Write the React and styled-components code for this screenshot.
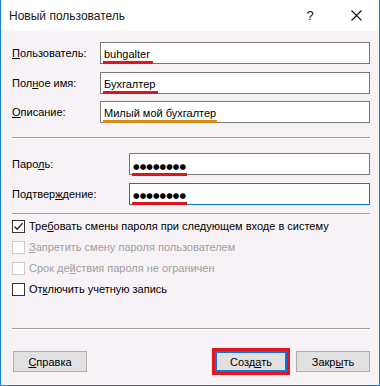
import React from "react";
import styled, { createGlobalStyle } from "styled-components";

const GlobalStyle = createGlobalStyle`
  html, body {
    margin: 0;
    padding: 0;
    background: #ffffff;
  }
  * {
    box-sizing: border-box;
  }
`;

export default function App() {
  return (
    <>
      <GlobalStyle />
      <Window>
        <TitleBar>
          <Title>Новый пользователь</Title>
          <HelpButton>?</HelpButton>
          <CloseButton>
            <svg width="11" height="11" viewBox="0 0 11 11">
              <path d="M0.5 0.5 L10.5 10.5 M10.5 0.5 L0.5 10.5" stroke="#111" strokeWidth="1.1" />
            </svg>
          </CloseButton>
        </TitleBar>

        <Client>
          <FieldGroup>
            <FieldRow>
              <Label width={88}>
                <Key>П</Key>ользователь:
              </Label>
              <Input>
                <Mark color="#e0141b" extra={3}>buhgalter</Mark>
              </Input>
            </FieldRow>
            <FieldRow>
              <Label width={88}>
                Пол<Key>н</Key>ое имя:
              </Label>
              <Input>
                <Mark color="#e0141b" extra={3}>Бухгалтер</Mark>
              </Input>
            </FieldRow>
            <FieldRow>
              <Label width={88}>
                <Key>О</Key>писание:
              </Label>
              <Input>
                <Mark color="#d98c14" extra={1}>Милый мой бухгалтер</Mark>
              </Input>
            </FieldRow>
          </FieldGroup>

          <Separator top={14} />

          <FieldGroup top={15}>
            <FieldRow>
              <Label width={117}>
                Паро<Key>л</Key>ь:
              </Label>
              <Input>
                <Mark color="#e0141b" extra={1}>
                  <Dots>●●●●●●●●</Dots>
                </Mark>
              </Input>
            </FieldRow>
            <FieldRow>
              <Label width={117}>
                Подтвер<Key>ж</Key>дение:
              </Label>
              <Input focused>
                <Mark color="#e0141b" extra={1}>
                  <Dots>●●●●●●●●</Dots>
                </Mark>
              </Input>
            </FieldRow>
          </FieldGroup>

          <Separator top={8} />

          <CheckList>
            <CheckRow>
              <Box checked>
                <svg width="11" height="11" viewBox="0 0 11 11">
                  <path d="M1.5 5.5 L4.2 8.3 L9.6 2.2" fill="none" stroke="#222" strokeWidth="1.3" />
                </svg>
              </Box>
              <CheckText>
                Тре<Key>б</Key>овать смены пароля при следующем входе в систему
              </CheckText>
            </CheckRow>
            <CheckRow>
              <Box disabled />
              <CheckText disabled>
                <Key>З</Key>апретить смену пароля пользователем
              </CheckText>
            </CheckRow>
            <CheckRow>
              <Box disabled />
              <CheckText disabled>
                Срок де<Key>й</Key>ствия пароля не ограничен
              </CheckText>
            </CheckRow>
            <CheckRow>
              <Box />
              <CheckText>
                От<Key>к</Key>лючить учетную запись
              </CheckText>
            </CheckRow>
          </CheckList>

          <Spacer />

          <Separator top={0} />

          <ButtonBar>
            <Button>
              <Key>С</Key>правка
            </Button>
            <Highlight>
              <Button primary>
                Созд<Key>а</Key>ть
              </Button>
            </Highlight>
            <Button>
              Закр<Key>ы</Key>ть
            </Button>
          </ButtonBar>
        </Client>
      </Window>
    </>
  );
}

const Window = styled.div`
  display: flex;
  flex-direction: column;
  width: 380px;
  height: 386px;
  border-left: 1px solid #1c7fd2;
  border-right: 1px solid #1c7fd2;
  border-bottom: 1px solid #1c7fd2;
  font-family: "Liberation Sans", Arial, sans-serif;
  font-size: 11px;
  color: #000;
`;

const TitleBar = styled.div`
  display: flex;
  align-items: center;
  height: 31px;
  flex-shrink: 0;
  padding-left: 8px;
  background: #ffffff;
`;

const Title = styled.div`
  flex: 1;
  font-size: 12px;
  color: #1a1a1a;
`;

const HelpButton = styled.div`
  width: 46px;
  text-align: center;
  font-size: 13px;
  color: #111;
`;

const CloseButton = styled.div`
  display: flex;
  align-items: center;
  justify-content: center;
  width: 46px;
`;

const Client = styled.div`
  display: flex;
  flex-direction: column;
  flex: 1;
  padding: 11px 9px 10px 11px;
  background: #f7f2f5;
`;

const FieldGroup = styled.div`
  display: flex;
  flex-direction: column;
  gap: 7.5px;
  margin-top: ${(p) => p.top || 0}px;
`;

const FieldRow = styled.div`
  display: flex;
  align-items: center;
  height: 22px;
`;

const Label = styled.div`
  width: ${(p) => p.width}px;
  flex-shrink: 0;
  white-space: nowrap;
`;

const Key = styled.span`
  text-decoration: underline;
  text-underline-offset: 1px;
`;

const Input = styled.div`
  display: flex;
  align-items: center;
  flex: 1;
  height: 22px;
  padding-left: 2px;
  background: #ffffff;
  border: 1px solid ${(p) => (p.focused ? "#0a78d4" : "#7a7a7a")};
  white-space: nowrap;
`;

const Mark = styled.span`
  display: inline-block;
  padding: 2px ${(p) => p.extra}px 0 1px;
  border-bottom: 3px solid ${(p) => p.color};
  line-height: 13px;
  margin-top: 4px;
`;

const Dots = styled.span`
  font-family: "DejaVu Sans", sans-serif;
  font-size: 7.5px;
  letter-spacing: 0.1px;
`;

const Separator = styled.div`
  height: 1px;
  flex-shrink: 0;
  margin-top: ${(p) => p.top}px;
  background: #a0a0a0;
  box-shadow: 0 1px 0 #ffffff;
`;

const CheckList = styled.div`
  display: flex;
  flex-direction: column;
  margin-top: 2px;
`;

const CheckRow = styled.div`
  display: flex;
  align-items: center;
  gap: 4px;
  height: 21px;
`;

const Box = styled.div`
  display: flex;
  align-items: center;
  justify-content: center;
  width: 13px;
  height: 13px;
  flex-shrink: 0;
  background: #ffffff;
  border: 1px solid ${(p) => (p.disabled ? "#cccccc" : "#333333")};
`;

const CheckText = styled.span`
  white-space: nowrap;
  color: ${(p) => (p.disabled ? "#a0a0a0" : "#000")};
`;

const Spacer = styled.div`
  flex: 1;
`;

const ButtonBar = styled.div`
  display: flex;
  align-items: center;
  gap: 6px;
  margin-top: 19px;
  padding-left: 1px;
`;

const Button = styled.div`
  display: flex;
  align-items: center;
  justify-content: center;
  width: ${(p) => (p.primary ? 72 : 74)}px;
  height: 21px;
  background: #e1e1e1;
  border: ${(p) => (p.primary ? "2px solid #0a78d4" : "1px solid #adadad")};
  &:first-child {
    margin-right: auto;
  }
`;

const Highlight = styled.div`
  display: flex;
  padding: 0;
  border: 3px solid #e3141e;
`;
